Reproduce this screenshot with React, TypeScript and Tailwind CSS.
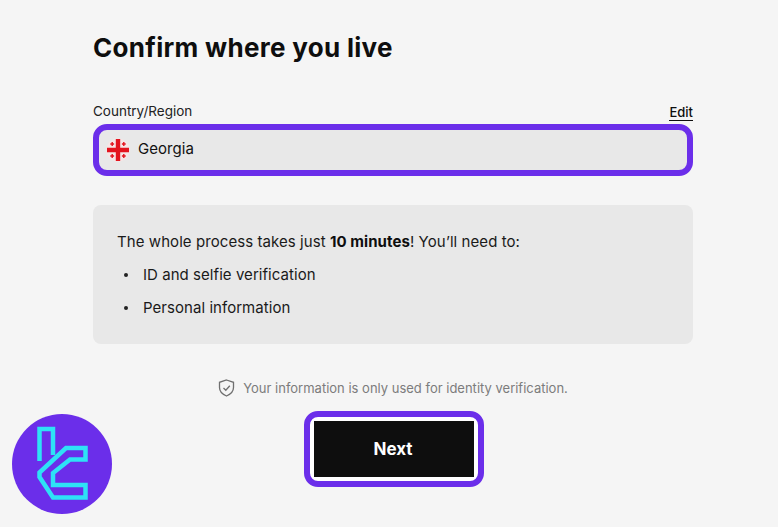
export default function App() {
  return (
    <div className="relative w-[778px] h-[527px] overflow-hidden bg-[#f5f5f5] text-[#0e0e0e]" style={{ fontFamily: 'Inter, "Liberation Sans", sans-serif' }}>
      <div className="ml-[93px] flex w-[600px] flex-col pt-[31px]">
        <h1 className="text-[26px] leading-[34px] font-bold tracking-[0.3px]">Confirm where you live</h1>
        <div className="mt-[36px] flex items-end justify-between">
          <span className="text-[13.5px] leading-[20px] text-[#222]">Country/Region</span>
          <span className="border-b border-[#0e0e0e] text-[13px] leading-[16px] font-medium">Edit</span>
        </div>
        <div className="mt-[3px] flex h-[52px] items-center gap-[8px] rounded-[14px] border-[6px] border-[#6b2eea] bg-[#e8e8e8] pl-[7px]">
          <svg width="24" height="24" viewBox="0 0 24 24">
            <circle cx="12" cy="12" r="11.500" fill="#f6e6e6" />
            <path d="M9.800 1h4.400v8.800H23v4.400h-8.800V23H9.800v-8.800H1V9.800h8.800z" fill="#e3141e" />
            <path d="M4.300 6h3.800M6.200 4.100v3.800M15.900 6h3.800M17.800 4.100v3.800M4.300 18h3.800M6.200 16.100v3.800M15.900 18h3.800M17.800 16.100v3.800" stroke="#e3141e" strokeWidth="1.400" />
          </svg>
          <span className="pb-[2px] text-[15px] tracking-[0.05px] text-[#111]">Georgia</span>
        </div>
        <div className="mt-[29px] flex h-[139px] flex-col rounded-[8px] bg-[#e8e8e8] pl-[24px] pt-[27px] text-[15px] leading-[20px] tracking-[0.05px] text-[#1a1a1a]">
          <p className="tracking-[0.07px]">The whole process takes just <b className="font-bold text-[#0e0e0e]">10 minutes</b>! You’ll need to:</p>
          <ul className="mt-[13px] flex flex-col gap-[13px]">
            <li className="flex items-center"><span className="ml-[7px] h-[4px] w-[4px] rounded-full bg-[#222]"></span><span className="ml-[15px]">ID and selfie verification</span></li>
            <li className="flex items-center"><span className="ml-[7px] h-[4px] w-[4px] rounded-full bg-[#222]"></span><span className="ml-[15px]">Personal information</span></li>
          </ul>
        </div>
        <div className="mt-[34px] flex items-center justify-center gap-[8px] text-[13px] leading-[20px] text-[#7c7c7c]">
          <svg width="17" height="18" viewBox="0 0 17 18" fill="none" stroke="#6f6f6f" strokeWidth="1.300">
            <path d="M8.500 1 15.500 3.300V8.500c0 4-3 6.800-7 8.500-4-1.700-7-4.500-7-8.500V3.300z" />
            <path d="M5.500 9 7.800 11.300 11.800 6.800" />
          </svg>
          <span>Your information is only used for identity verification.</span>
        </div>
        <div className="mt-[13px] flex justify-center pl-[2px]">
          <div className="rounded-[14px] border-[6px] border-[#6b2eea] bg-white p-[4px]">
            <button className="flex h-[56px] w-[160px] items-center justify-center bg-[#0e0e0e] pr-[2px] pt-[1px] text-[17px] font-bold text-white">Next</button>
          </div>
        </div>
      </div>
      <svg className="absolute left-[12px] top-[414px]" width="100" height="100" viewBox="12 414 100 100" fill="none">
        <circle cx="62" cy="464" r="50" fill="#6b2eea" />
        <path d="M53 455V429H39.500V461" stroke="#2ee2f6" strokeWidth="4.500" />
        <path d="M66 448H85.500V459.500H70L53 473V485H85.500V497.500H53L39.500 477V472.500Z" stroke="#2ee2f6" strokeWidth="4.500" />
      </svg>
    </div>
  );
}
